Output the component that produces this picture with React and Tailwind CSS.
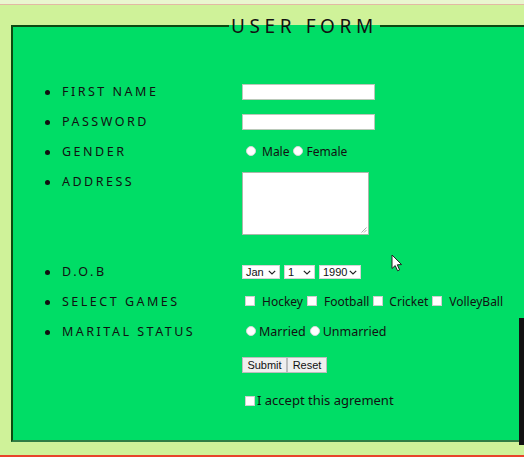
import React from "react";

const font = { fontFamily: '"Comic Sans MS", "Noto Sans", sans-serif' };

function Bullet() {
  return <span className="inline-block w-[5px] h-[5px] rounded-full bg-[#111] mr-[12px] shrink-0" />;
}

function Label({ children }) {
  return (
    <div className="w-[229px] pl-[32px] flex items-center shrink-0">
      <Bullet />
      <span className="text-[12.5px] tracking-[2.5px] text-[#111] leading-none">{children}</span>
    </div>
  );
}

function Radio() {
  return <span className="inline-block w-[10px] h-[10px] rounded-full bg-white border border-[#d8d8d8] shrink-0" />;
}

function Check() {
  return <span className="inline-block w-[10px] h-[10px] bg-white border border-[#cfcfcf] shrink-0" />;
}

function Select({ value, w }) {
  return (
    <div
      className={`flex items-center justify-between h-[14px] bg-white border border-[#d5d5d5] pl-[3px] pr-[3px] ${w}`}
      style={{ fontFamily: '"Liberation Sans", Arial, sans-serif' }}
    >
      <span className="text-[11px] leading-none text-[#111]">{value}</span>
      <svg width="8" height="5" viewBox="0 0 8 5" className="shrink-0">
        <path d="M0.8 0.8 L4 4 L7.2 0.8" fill="none" stroke="#222" strokeWidth="1.2" />
      </svg>
    </div>
  );
}

export default function App() {
  return (
    <div className="relative w-[524px] h-[457px] bg-[#cff299] overflow-hidden flex flex-col" style={font}>
      <div className="h-[4px] bg-[#e9f6cf] shrink-0" />
      <div className="h-[1px] bg-[#e2b9a3] shrink-0" />
      <fieldset className="ml-[11px] mt-[8px] w-[640px] border-2 border-[#0c4a12] border-b-[#2f7d45] bg-[#00dd66] shrink-0">
        <legend className="ml-[216px] px-[2px] text-[19px] tracking-[4.6px] leading-[26px] text-[#111]">
          USER FORM
        </legend>
        <ul className="pt-[38px] pb-[32px]">
          <li className="flex items-center h-[30px]">
            <Label>FIRST NAME</Label>
            <div className="w-[133px] h-[16px] bg-white border border-[#b9c9b9]" />
          </li>
          <li className="flex items-center h-[30px]">
            <Label>PASSWORD</Label>
            <div className="w-[133px] h-[16px] bg-white border border-[#b9c9b9]" />
          </li>
          <li className="flex items-center h-[30px]">
            <Label>GENDER</Label>
            <div className="flex items-center text-[12px] text-[#111] leading-none">
              <span className="ml-[4px] mr-[6px]"><Radio /></span>
              <span>Male</span>
              <span className="ml-[4px] mr-[3px]"><Radio /></span>
              <span>Female</span>
            </div>
          </li>
          <li className="flex items-start h-[90px]">
            <div className="h-[30px] flex items-center">
              <Label>ADDRESS</Label>
            </div>
            <div className="relative mt-[5px] w-[127px] h-[63px] bg-white border border-[#aab8aa]">
              <svg width="6" height="6" viewBox="0 0 6 6" className="absolute right-[1px] bottom-[1px]">
                <path d="M5.5 0.5 L0.5 5.5 M5.5 3 L3 5.5" stroke="#999" strokeWidth="0.8" />
              </svg>
            </div>
          </li>
          <li className="flex items-center h-[30px]">
            <Label>D.O.B</Label>
            <div className="flex items-center gap-[4px]">
              <Select value="Jan" w="w-[38px]" />
              <Select value="1" w="w-[31px]" />
              <Select value="1990" w="w-[42px]" />
            </div>
          </li>
          <li className="flex items-center h-[30px]">
            <Label>SELECT GAMES</Label>
            <div className="flex items-center text-[12px] text-[#111] leading-none">
              <span className="ml-[3px] mr-[7px]"><Check /></span>
              <span>Hockey</span>
              <span className="ml-[4px] mr-[7px]"><Check /></span>
              <span>Football</span>
              <span className="ml-[4px] mr-[6px]"><Check /></span>
              <span>Cricket</span>
              <span className="ml-[4px] mr-[7px]"><Check /></span>
              <span>VolleyBall</span>
            </div>
          </li>
          <li className="flex items-center h-[30px]">
            <Label>MARITAL STATUS</Label>
            <div className="flex items-center text-[12.5px] text-[#111] leading-none">
              <span className="ml-[4px] mr-[3px]"><Radio /></span>
              <span>Married</span>
              <span className="ml-[4px] mr-[3px]"><Radio /></span>
              <span>Unmarried</span>
            </div>
          </li>
          <li className="flex pl-[229px] pt-[10px]">
            <div className="flex" style={{ fontFamily: '"Liberation Sans", Arial, sans-serif' }}>
              <button className="h-[16px] w-[45px] bg-[#efefef] border border-[#bdbdbd] text-[11px] leading-none text-[#111]">
                Submit
              </button>
              <button className="h-[16px] w-[40px] bg-[#efefef] border border-[#bdbdbd] text-[11px] leading-none text-[#111]">
                Reset
              </button>
            </div>
          </li>
          <li className="flex items-center pl-[229px] mt-[19px] h-[16px]">
            <span className="ml-[3px] mr-[2px]"><Check /></span>
            <span className="text-[13px] text-[#111] leading-none">I accept this agrement</span>
          </li>
        </ul>
      </fieldset>
      <div className="flex-1" />
      <div className="h-[2px] bg-[#e8442c] shrink-0" />
      <div className="absolute left-[519px] top-[318px] w-[5px] h-[127px] bg-[#111]" />
      <svg className="absolute left-[391px] top-[254px]" width="12" height="18" viewBox="0 0 12 18">
        <path d="M1 1 L1 14.5 L4.2 11.6 L6.6 16.8 L8.6 15.9 L6.3 10.8 L10.6 10.6 Z" fill="#fff" stroke="#222" strokeWidth="1" strokeLinejoin="round" />
      </svg>
    </div>
  );
}
